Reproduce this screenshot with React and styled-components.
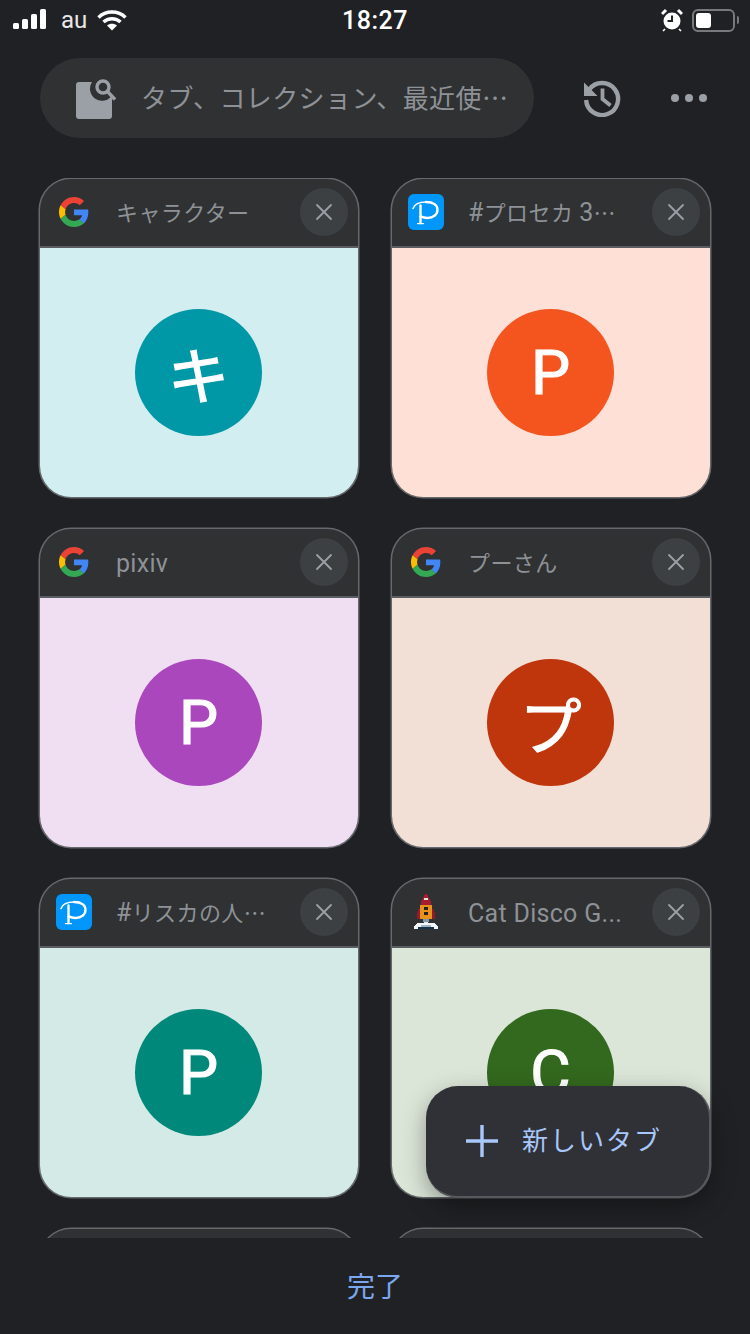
import React from "react";
import styled, { createGlobalStyle } from "styled-components";

const FONT = `Roboto, "Noto Sans CJK JP", sans-serif`;

// latin characters in the tab titles are set bigger than the kana around them
const Latin = styled.span`
  font-size: 25px;
  letter-spacing: 0.3px;
`;

// a title with no kana sits a bit lower in the header
const LatinOnly = styled(Latin)`
  display: inline-block;
  margin-top: 5px;
`;

const CjkEllipsis = styled.span`
  font-family: "Noto Sans CJK JP", sans-serif;
`;

const tabs = [
  { title: "キャラクター", favicon: "google", letter: "キ", bg: "#d3eef0", circle: "#0097a7" },
  { title: <><Latin>#</Latin>プロセカ <Latin>3</Latin><CjkEllipsis>…</CjkEllipsis></>, favicon: "pixiv", letter: "P", bg: "#ffe0d6", circle: "#f4541e" },
  { title: <LatinOnly>pixiv</LatinOnly>, favicon: "google", letter: "P", bg: "#f0dff3", circle: "#ab47bc" },
  { title: "プーさん", favicon: "google", letter: "プ", bg: "#f2dfd5", circle: "#bf360c" },
  { title: <><Latin>#</Latin>リスカの人<CjkEllipsis>…</CjkEllipsis></>, favicon: "pixiv", letter: "P", bg: "#d3eae6", circle: "#00897b" },
  { title: <LatinOnly>Cat Disco G...</LatinOnly>, favicon: "rocket", letter: "C", bg: "#dce6d8", circle: "#33691e" },
  { title: "", favicon: null, letter: "", bg: "#2f3133", circle: "transparent" },
  { title: "", favicon: null, letter: "", bg: "#2f3133", circle: "transparent" },
];

function GoogleIcon() {
  return (
    <svg width="30" height="30" viewBox="0 0 48 48">
      <path fill="#EA4335" d="M24 9.5c3.54 0 6.71 1.22 9.21 3.6l6.85-6.85C35.9 2.38 30.47 0 24 0 14.62 0 6.51 5.38 2.56 13.22l7.98 6.19C12.43 13.72 17.74 9.5 24 9.5z" />
      <path fill="#4285F4" d="M46.98 24.55c0-1.57-.15-3.09-.38-4.55H24v9.02h12.94c-.58 2.96-2.26 5.48-4.78 7.18l7.73 6c4.51-4.18 7.09-10.36 7.09-17.65z" />
      <path fill="#FBBC05" d="M10.53 28.59c-.48-1.45-.76-2.99-.76-4.59s.27-3.14.76-4.59l-7.98-6.19C.92 16.46 0 20.12 0 24c0 3.88.92 7.54 2.56 10.78l7.97-6.19z" />
      <path fill="#34A853" d="M24 48c6.48 0 11.93-2.13 15.89-5.81l-7.73-6c-2.15 1.45-4.92 2.3-8.16 2.3-6.26 0-11.57-4.22-13.47-9.91l-7.98 6.19C6.51 42.62 14.62 48 24 48z" />
    </svg>
  );
}

function PixivIcon() {
  return (
    <svg width="36" height="36" viewBox="0 0 36 36">
      <rect width="36" height="36" rx="6" fill="#0096fa" />
      <g fill="none" stroke="#fff" strokeLinecap="round">
        <path strokeWidth="1.6" d="M5 14.5C6.5 10.5 11.5 8 18 8" />
        <path strokeWidth="2.4" d="M18 8c7.5 0 11.5 3.2 11.5 7.8 0 5-4.5 8.2-10 8.2-2.6 0-5-.6-7-1.6" />
        <path strokeWidth="2.4" d="M12.5 11.5V29" />
        <path strokeWidth="1.3" d="M9.5 29.6h6" />
      </g>
    </svg>
  );
}

function RocketIcon() {
  return (
    <svg width="26" height="36" viewBox="0 0 26 36" shapeRendering="crispEdges">
      <path fill="#a81c30" d="M12 0h2l2 4 2 4v3H8V8l2-4z" />
      <rect x="11" y="4" width="4" height="2" fill="#e9e3d8" />
      <path fill="#8f1b2c" d="M7 15H5v3H4v7h4v-5zM19 15h2v3h1v7h-4v-5z" />
      <rect x="7" y="11" width="12" height="14" fill="#e8921c" />
      <rect x="11" y="13" width="4" height="3" fill="#222" />
      <rect x="11" y="18" width="4" height="3" fill="#222" />
      <rect x="10" y="25" width="6" height="3" fill="#7f98ad" />
      <rect x="11" y="28" width="4" height="2" fill="#dfe8ef" />
      <path fill="#f4f7fa" d="M5 29h16l4 3v3H1v-3z" />
      <rect x="5" y="33" width="16" height="2" fill="#16324a" />
      <rect x="8" y="31" width="10" height="2" fill="#9fb3c4" />
    </svg>
  );
}

const favicons = { google: GoogleIcon, pixiv: PixivIcon, rocket: RocketIcon };

function TabCard({ tab }) {
  const Favicon = favicons[tab.favicon];
  return (
    <Card>
      <CardHeader>
        <FaviconSlot>{Favicon && <Favicon />}</FaviconSlot>
        <CardTitle>{tab.title}</CardTitle>
        {Favicon && (
          <CloseButton>
            <svg width="18" height="18" viewBox="0 0 18 18" stroke="#9aa0a6" strokeWidth="1.8" strokeLinecap="round">
              <path d="M2 2l14 14M16 2L2 16" />
            </svg>
          </CloseButton>
        )}
      </CardHeader>
      <Thumb $bg={tab.bg}>
        <Avatar $bg={tab.circle}>{tab.letter}</Avatar>
      </Thumb>
    </Card>
  );
}

export default function App() {
  return (
    <Page>
      <GlobalStyle />
      <StatusBar>
        <StatusLeft>
          <svg width="34" height="22" viewBox="0 0 34 22" fill="#fff">
            <rect x="0" y="14" width="6" height="6" rx="1.5" />
            <rect x="9" y="10" width="6" height="10" rx="1.5" />
            <rect x="18" y="5" width="6" height="15" rx="1.5" />
            <rect x="27" y="0" width="6" height="20" rx="1.5" />
          </svg>
          <Carrier>au</Carrier>
          <svg width="30" height="22" viewBox="0 0 30 22" fill="none" stroke="#fff" strokeWidth="3.4">
            <path d="M1.5 8.5C8.8 1.2 21.2 1.2 28.5 8.5" />
            <path d="M6.5 13C11 8.6 19 8.6 23.5 13" />
            <path d="M15 21.5l-5-5c2.6-2.4 7.4-2.4 10 0z" fill="#fff" stroke="none" />
          </svg>
        </StatusLeft>
        <Clock>18:27</Clock>
        <StatusRight>
          <svg width="22" height="24" viewBox="0 0 22 24">
            <circle cx="11" cy="13" r="8.5" fill="#fff" />
            <path d="M11 7.5V13H6.5" fill="none" stroke="#202124" strokeWidth="2" />
            <path d="M1 6l4-4M21 6l-4-4" stroke="#fff" strokeWidth="3" />
            <path d="M4 21l-2 2M18 21l2 2" stroke="#fff" strokeWidth="1.6" />
          </svg>
          <Battery>
            <BatteryLevel />
          </Battery>
          <BatteryNub />
        </StatusRight>
      </StatusBar>

      <Toolbar>
        <SearchBox>
          <svg width="40" height="42" viewBox="0 -1 40 42">
            <path fill="#9aa0a6" d="M3 4h13.1A12 12 0 0 0 36 17.5V38a3 3 0 0 1-3 3H3a3 3 0 0 1-3-3V7a3 3 0 0 1 3-3z" />
            <circle cx="27" cy="9" r="6" fill="none" stroke="#9aa0a6" strokeWidth="3.4" />
            <path d="M31.5 13.5l7.5 8" stroke="#9aa0a6" strokeWidth="3.4" />
          </svg>
          <SearchText>
            タブ、コレクション、最近使<CjkEllipsis>…</CjkEllipsis>
          </SearchText>
        </SearchBox>
        <ToolIcons>
          <svg width="38" height="38" viewBox="0 0 38 38" fill="none" stroke="#9aa0a6">
            <path strokeWidth="4.4" d="M6.2 10.5A16 16 0 1 1 3.1 21" />
            <path fill="#9aa0a6" stroke="none" d="M1 3.5l13.5 13.5H1z" />
            <path strokeWidth="3.8" d="M19.5 9.5v10.5l8 6.5" />
          </svg>
          <MoreDots>
            <Dot />
            <Dot />
            <Dot />
          </MoreDots>
        </ToolIcons>
      </Toolbar>

      <GridArea>
        <TabGrid>
          {tabs.map((tab, i) => (
            <TabCard key={i} tab={tab} />
          ))}
        </TabGrid>
        <NewTabButton>
          <svg width="34" height="34" viewBox="0 0 34 34" stroke="#a8c7fa" strokeWidth="3.4">
            <path d="M17 1v32M1 17h32" />
          </svg>
          <NewTabLabel>新しいタブ</NewTabLabel>
        </NewTabButton>
      </GridArea>

      <BottomBar>
        <DoneButton>完了</DoneButton>
      </BottomBar>
    </Page>
  );
}

const GlobalStyle = createGlobalStyle`
  html, body {
    margin: 0;
    padding: 0;
    background: #202124;
  }
`;

const Page = styled.div`
  width: 750px;
  height: 1334px;
  display: flex;
  flex-direction: column;
  background: #202124;
  font-family: ${FONT};
  overflow: hidden;
`;

const StatusBar = styled.div`
  height: 40px;
  display: grid;
  grid-template-columns: 1fr auto 1fr;
  align-items: center;
  padding: 0 13px;
  color: #fff;
`;

const StatusLeft = styled.div`
  display: flex;
  align-items: center;
  gap: 10px;

  > svg:first-child {
    margin-right: 4px;
  }
`;

const Carrier = styled.span`
  font-size: 24px;
  color: #e8e8e8;
`;

const Clock = styled.span`
  font-size: 25px;
  font-weight: 500;
  letter-spacing: 0.5px;
`;

const StatusRight = styled.div`
  display: flex;
  align-items: center;
  justify-content: flex-end;
  gap: 9px;
  margin-right: -2px;
`;

const Battery = styled.div`
  width: 43px;
  height: 23px;
  box-sizing: border-box;
  border: 2px solid #77797c;
  border-radius: 6px;
  padding: 2px;
`;

const BatteryLevel = styled.div`
  width: 15px;
  height: 100%;
  border-radius: 3px;
  background: #fff;
`;

const BatteryNub = styled.div`
  width: 2px;
  height: 8px;
  margin-left: -7px;
  border-radius: 0 2px 2px 0;
  background: #77797c;
`;

const Toolbar = styled.div`
  height: 80px;
  margin-top: 18px;
  padding-left: 40px;
  display: flex;
  align-items: center;
`;

const SearchBox = styled.div`
  width: 494px;
  height: 80px;
  box-sizing: border-box;
  padding-left: 36px;
  display: flex;
  align-items: center;
  gap: 25px;
  background: #2f3133;
  border-radius: 40px;
`;

const SearchText = styled.span`
  font-size: 26px;
  letter-spacing: 0.4px;
  color: #8e9196;
  white-space: nowrap;
  margin-bottom: 4px;
`;

const ToolIcons = styled.div`
  display: flex;
  align-items: center;
  margin-left: 49px;
  gap: 50px;
`;

const MoreDots = styled.div`
  display: flex;
  gap: 6px;
`;

const Dot = styled.span`
  width: 8px;
  height: 8px;
  border-radius: 50%;
  background: #9aa0a6;
`;

const GridArea = styled.div`
  position: relative;
  flex: 1;
  margin-top: 40px;
  padding-top: 1px;
  overflow: hidden;
`;

const TabGrid = styled.div`
  display: grid;
  grid-template-columns: 318px 318px;
  column-gap: 34px;
  row-gap: 32px;
  padding-left: 40px;
`;

const Card = styled.div`
  width: 318px;
  height: 318px;
  display: flex;
  flex-direction: column;
  border-radius: 31px;
  overflow: hidden;
  background: #2f3133;
  box-shadow: 0 0 0 1.5px #65686c;
`;

const CardHeader = styled.div`
  height: 69px;
  flex: none;
  box-sizing: border-box;
  display: flex;
  align-items: center;
  padding: 0 10px 2px 16px;
  border-bottom: 2px solid #5a5d61;
`;

const FaviconSlot = styled.div`
  width: 36px;
  height: 36px;
  flex: none;
  display: flex;
  align-items: center;
  justify-content: center;
`;

const CardTitle = styled.span`
  flex: 1;
  margin: 0 0 1px 24px;
  font-size: 22px;
  letter-spacing: 0.4px;
  color: #8e9196;
  white-space: nowrap;
  overflow: hidden;
`;

const CloseButton = styled.div`
  width: 48px;
  height: 48px;
  flex: none;
  display: flex;
  align-items: center;
  justify-content: center;
  border-radius: 50%;
  background: #3c4043;
`;

const Thumb = styled.div`
  flex: 1;
  display: flex;
  align-items: center;
  justify-content: center;
  padding-right: 1px;
  background: ${(p) => p.$bg};
`;

const Avatar = styled.div`
  width: 127px;
  height: 127px;
  display: flex;
  align-items: center;
  justify-content: center;
  border-radius: 50%;
  background: ${(p) => p.$bg};
  color: #fff;
  font-size: 62px;
  -webkit-text-stroke: 1.2px #fff;
`;

const NewTabButton = styled.div`
  position: absolute;
  left: 426px;
  top: 908px;
  width: 285px;
  height: 112px;
  box-sizing: border-box;
  display: flex;
  align-items: center;
  padding-left: 39px;
  gap: 23px;
  background: #303136;
  border-radius: 32px;
  border-right: 2px solid #55585c;
  border-bottom: 2px solid #55585c;
  box-shadow: 0 8px 24px rgba(0, 0, 0, 0.35);
`;

const NewTabLabel = styled.span`
  font-size: 26px;
  letter-spacing: 2px;
  color: #a8c7fa;
  margin-bottom: 5px;
`;

const BottomBar = styled.div`
  height: 96px;
  flex: none;
  display: flex;
  align-items: center;
  justify-content: center;
  background: #202124;
`;

const DoneButton = styled.span`
  font-size: 28px;
  color: #7ba7ee;
  margin-bottom: 2px;
`;
